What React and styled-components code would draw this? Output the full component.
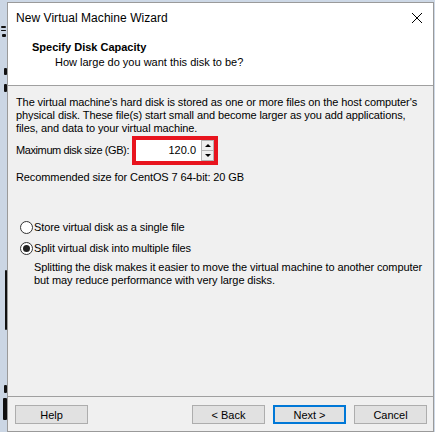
import React from "react";
import styled, { createGlobalStyle } from "styled-components";

const Global = createGlobalStyle`
  html, body { margin: 0; padding: 0; background: #cdd8e6; }
  body { width: 435px; height: 432px; overflow: hidden; font-family: "Liberation Sans", Arial, sans-serif; }
`;

const Screen = styled.div`
  display: flex;
  width: 435px;
  height: 432px;
  background: #cdd8e6;
`;

const Desktop = styled.div`
  position: relative;
  width: 7px;
  flex: none;
  background: #cbd6e4;
`;

const Mark = styled.div`
  position: absolute;
  left: ${p => p.$x}px;
  top: ${p => p.$y}px;
  width: ${p => p.$w}px;
  height: ${p => p.$h}px;
  background: #111;
  border-radius: 1px;
`;

const Window = styled.div`
  margin-top: 2px;
  width: 425px;
  height: 428px;
  flex: none;
  border: 1px solid #9a9a9a;
  background: #f0f0f0;
  display: flex;
  flex-direction: column;
  color: #000;
`;

const Header = styled.div`
  background: #fff;
  height: 82px;
  flex: none;
  border-bottom: 1px solid #a0a0a0;
  display: flex;
  flex-direction: column;
`;

const TitleBar = styled.div`
  height: 30px;
  display: flex;
  align-items: center;
  justify-content: space-between;
  padding: 0 10px 0 8px;
`;

const Title = styled.span`
  font-size: 12px;
  color: #000;
  letter-spacing: 0.05px;
`;

const Close = styled.div`
  width: 12px;
  height: 12px;
  display: flex;
`;

const HeadTitle = styled.div`
  font-size: 11px;
  font-weight: bold;
  margin: 8px 0 0 24px;
`;

const HeadSub = styled.div`
  font-size: 11px;
  margin: 3px 0 0 47px;
`;

const Body = styled.div`
  flex: 1;
  padding: 10px 8px 0 8px;
  font-size: 11px;
  line-height: 13px;
  display: flex;
  flex-direction: column;
  white-space: nowrap;
`;

const Para = styled.p`
  margin: 0;
  letter-spacing: -0.1px;
`;

const SizeRow = styled.div`
  display: flex;
  align-items: center;
  margin-top: 1px;
`;

const Label = styled.span`
  width: 116px;
  flex: none;
  letter-spacing: -0.4px;
`;

const Highlight = styled.div`
  border: 4px solid #e8141e;
  width: 78px;
  height: 21px;
  display: flex;
  background: #fff;
`;

const Input = styled.div`
  flex: 1;
  text-align: right;
  padding-right: 4px;
  line-height: 21px;
  font-size: 11px;
  background: #fff;
`;

const Spinner = styled.div`
  width: 13px;
  display: flex;
  flex-direction: column;
  border-left: 1px solid #fff;
`;

const SpinBtn = styled.div`
  flex: 1;
  background: #eeeeee;
  border: 1px solid #b4b4b4;
  display: flex;
  align-items: center;
  justify-content: center;
  & + & { border-top: none; }
`;

const Arrow = styled.div`
  width: 0;
  height: 0;
  border-left: 3px solid transparent;
  border-right: 3px solid transparent;
  ${p => p.$up ? "border-bottom: 3px solid #000;" : "border-top: 3px solid #000;"}
`;

const Recommend = styled.div`
  margin-top: 6px;
  letter-spacing: -0.1px;
`;

const Options = styled.div`
  margin-top: 37px;
  display: flex;
  flex-direction: column;
  gap: 8px;
`;

const RadioRow = styled.label`
  display: flex;
  align-items: center;
  gap: 1px;
  margin-left: 4px;
  letter-spacing: -0.1px;
`;

const Radio = styled.span`
  width: 11px;
  height: 11px;
  border: 1px solid #333;
  border-radius: 50%;
  background: #fff;
  display: flex;
  align-items: center;
  justify-content: center;
  &::after {
    content: "";
    width: 7px;
    height: 7px;
    border-radius: 50%;
    background: ${p => p.$on ? "#222" : "transparent"};
  }
`;

const Note = styled.p`
  margin: 6px 0 0 18px;
  letter-spacing: -0.1px;
`;

const Footer = styled.div`
  height: 35px;
  flex: none;
  border-top: 1px solid #a0a0a0;
  display: flex;
  align-items: flex-start;
  padding: 8px 6px 0 7px;
  gap: 8px;
  box-sizing: border-box;
`;

const Button = styled.div`
  box-sizing: border-box;
  width: 73px;
  height: 19px;
  border: ${p => p.$def ? "2px solid #0078d7" : "1px solid #adadad"};
  background: #e1e1e1;
  font-size: 11px;
  display: flex;
  align-items: center;
  justify-content: center;
`;

const Spacer = styled.div`
  flex: 1;
`;

export default function App() {
  return (
    <Screen>
      <Global />
      <Desktop>
        <Mark $x={1} $y={26} $w={5} $h={2} />
        <Mark $x={1} $y={30} $w={5} $h={1} />
        <Mark $x={2} $y={34} $w={4} $h={3} />
        <Mark $x={4} $y={68} $w={3} $h={7} />
        <Mark $x={4} $y={84} $w={3} $h={8} />
        <Mark $x={5} $y={270} $w={2} $h={60} />
        <Mark $x={4} $y={385} $w={3} $h={8} />
        <Mark $x={3} $y={398} $w={4} $h={22} />
      </Desktop>
      <Window>
        <Header>
          <TitleBar>
            <Title>New Virtual Machine Wizard</Title>
            <Close>
              <svg width="12" height="12" viewBox="0 0 12 12">
                <path d="M1 1L11 11M11 1L1 11" stroke="#000" strokeWidth="1" />
              </svg>
            </Close>
          </TitleBar>
          <HeadTitle>Specify Disk Capacity</HeadTitle>
          <HeadSub>How large do you want this disk to be?</HeadSub>
        </Header>
        <Body>
          <Para>
            The virtual machine's hard disk is stored as one or more files on the host computer's
            <br />
            physical disk. These file(s) start small and become larger as you add applications,
            <br />
            files, and data to your virtual machine.
          </Para>
          <SizeRow>
            <Label>Maximum disk size (GB):</Label>
            <Highlight>
              <Input>120.0</Input>
              <Spinner>
                <SpinBtn><Arrow $up /></SpinBtn>
                <SpinBtn><Arrow /></SpinBtn>
              </Spinner>
            </Highlight>
          </SizeRow>
          <Recommend>Recommended size for CentOS 7 64-bit: 20 GB</Recommend>
          <Options>
            <RadioRow><Radio />Store virtual disk as a single file</RadioRow>
            <RadioRow><Radio $on />Split virtual disk into multiple files</RadioRow>
          </Options>
          <Note>
            Splitting the disk makes it easier to move the virtual machine to another computer
            <br />
            but may reduce performance with very large disks.
          </Note>
        </Body>
        <Footer>
          <Button>Help</Button>
          <Spacer />
          <Button>&lt; Back</Button>
          <Button $def>Next &gt;</Button>
          <Button>Cancel</Button>
        </Footer>
      </Window>
    </Screen>
  );
}
